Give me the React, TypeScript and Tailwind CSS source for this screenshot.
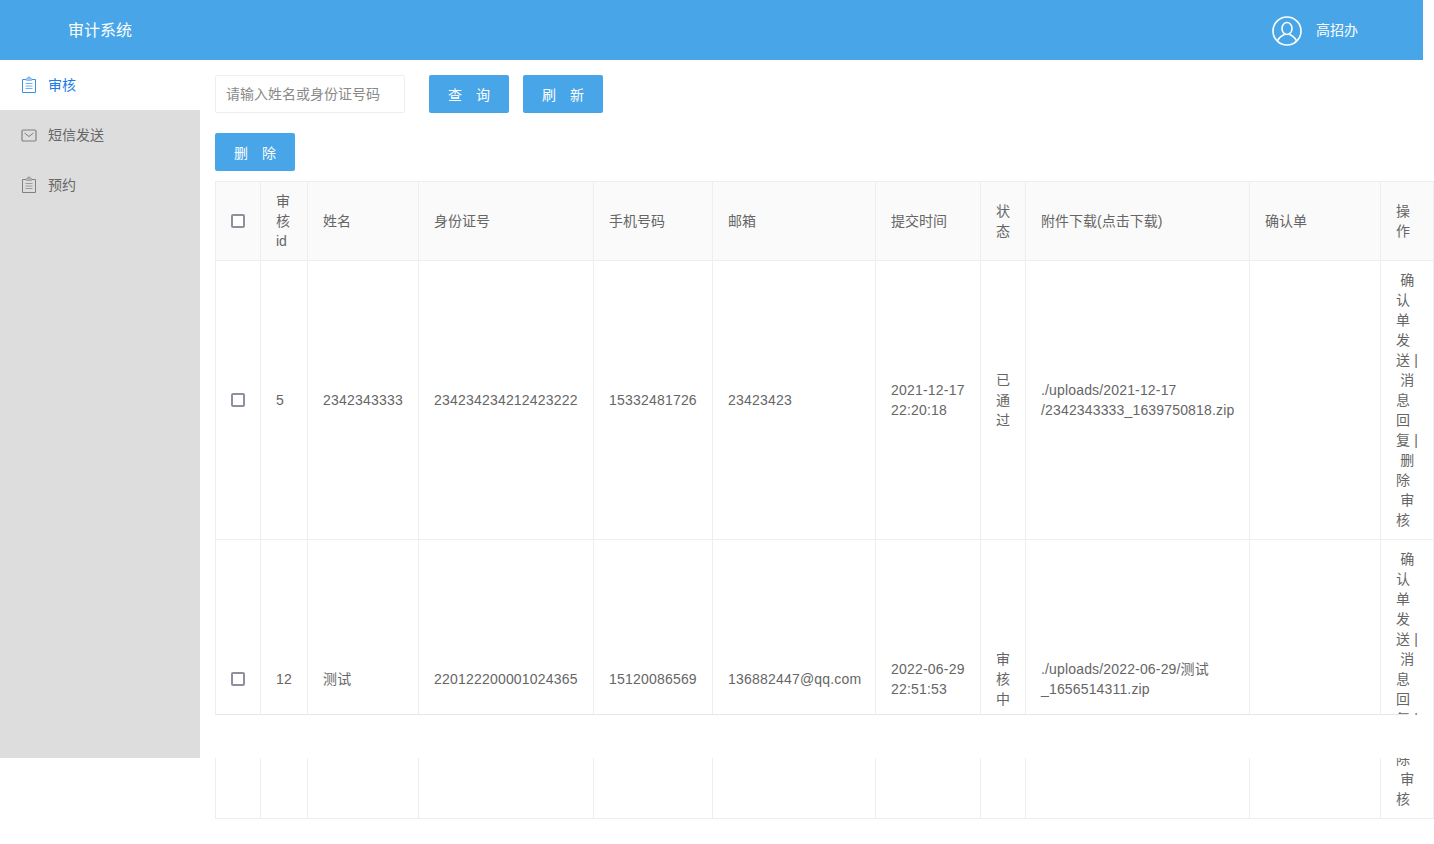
import type { ReactNode } from "react";

function ClipboardIcon({ className }: { className: string }) {
  return (
    <svg width="16" height="18" viewBox="0 0 16 18" fill="none" className={className}>
      <path d="M5 3.5H1.5V16.5H14.5V3.5H11" stroke="currentColor" />
      <path d="M5.5 3.5V2.5H6.8V1H9.2V2.5H10.5V4.5H5.5Z" fill="currentColor" fillOpacity="0.45" stroke="currentColor" strokeOpacity="0.6" strokeWidth="0.8" />
      <path d="M4.5 7.5H11.5M4.5 10H11.5M4.5 12.5H11.5" stroke="currentColor" strokeOpacity="0.7" />
    </svg>
  );
}

function MailIcon({ className }: { className: string }) {
  return (
    <svg width="16" height="13" viewBox="0 0 16 13" fill="none" className={className}>
      <rect x="1" y="1" width="14" height="11" rx="1.2" stroke="currentColor" strokeWidth="1.2" />
      <path d="M3.5 4L8 7.5L12.5 4" stroke="currentColor" />
    </svg>
  );
}

function UserIcon() {
  return (
    <svg width="30" height="30" viewBox="0 0 30 30" fill="none" className="mt-[2px] text-white">
      <circle cx="15" cy="15" r="14" stroke="currentColor" strokeWidth="1.6" />
      <ellipse cx="15" cy="12.5" rx="5" ry="6" stroke="currentColor" strokeWidth="1.6" />
      <path d="M5.5 25C7 21 10 19.5 12.5 18.5M24.500 25C23 21 20 19.500 17.500 18.500" stroke="currentColor" strokeWidth="1.6" />
    </svg>
  );
}

function Btn({ a, b }: { a: string; b: string }) {
  return (
    <button className="flex h-[38px] w-20 items-center justify-center gap-[14px] rounded-[2px] bg-[#48a6e8] pt-[2px] text-sm text-white">
      <span>{a}</span>
      <span>{b}</span>
    </button>
  );
}

function Checkbox() {
  return <input type="checkbox" className="block h-[14px] w-[14px] appearance-none rounded-[2px] border-2 border-[#8f8f9d] bg-white" />;
}

const widths = [45, 47, 111, 175, 119, 163, 105, 45, 224, 131, 53];
const headers: ReactNode[] = [
  <Checkbox />,
  "审核id",
  "姓名",
  "身份证号",
  "手机号码",
  "邮箱",
  "提交时间",
  "状态",
  "附件下载(点击下载)",
  "确认单",
  "操作",
];

const rows = [
  {
    id: "5",
    name: "2342343333",
    card: "234234234212423222",
    phone: "15332481726",
    email: "23423423",
    date: "2021-12-17",
    time: "22:20:18",
    status: "已通过",
    file: ["./uploads/2021-12-17", "/2342343333_1639750818.zip"],
  },
  {
    id: "12",
    name: "测试",
    card: "220122200001024365",
    phone: "15120086569",
    email: "136882447@qq.com",
    date: "2022-06-29",
    time: "22:51:53",
    status: "审核中",
    file: ["./uploads/2022-06-29/测试", "_1656514311.zip"],
  },
];

const cell = "border border-[#eeeeee] px-[15px] py-[9px] align-middle text-sm leading-5 font-normal text-[#666666]";
const latin = "tracking-[0.2px]";

export default function App() {
  return (
    <div className="relative min-h-[844px] bg-white font-['Liberation_Sans','Noto_Sans_CJK_SC',sans-serif]">
      {/* Header */}
      <header className="flex h-[60px] w-[1423px] items-center justify-between bg-[#48a6e8] pr-[65px] pl-[68px] text-white">
        <span className="pt-[2px] text-base">审计系统</span>
        <div className="flex items-center gap-[14px]">
          <UserIcon />
          <span className="text-sm">高招办</span>
        </div>
      </header>

      <div className="flex items-start">
        {/* Sidebar */}
        <aside className="h-[698px] w-[200px] shrink-0 bg-[#dddddd] text-sm text-[#666666]">
          <div className="flex h-[50px] items-center gap-[11px] bg-white pl-[21px] text-[#1a7be6]">
            <ClipboardIcon className="text-[#3b8fe8]" />
            <span>审核</span>
          </div>
          <div className="flex h-[50px] items-center gap-[11px] pl-[21px]">
            <MailIcon className="text-[#808080]" />
            <span>短信发送</span>
          </div>
          <div className="flex h-[50px] items-center gap-[11px] pl-[21px]">
            <ClipboardIcon className="text-[#808080]" />
            <span>预约</span>
          </div>
        </aside>

        {/* Main */}
        <main className="w-[1234px] pt-[15px] pl-[15px]">
          <div className="flex items-center">
            <input
              placeholder="请输入姓名或身份证号码"
              className="mr-6 h-[38px] w-[190px] rounded-[2px] border border-[#eeeeee] pl-[10px] text-sm outline-none placeholder:text-[#8a8a8a]"
            />
            <div className="flex gap-[14px]">
              <Btn a="查" b="询" />
              <Btn a="刷" b="新" />
            </div>
          </div>
          <div className="mt-5 mb-[10px]">
            <Btn a="删" b="除" />
          </div>

          <table className="w-[1218px] table-fixed border-collapse">
            <colgroup>
              {widths.map((w, i) => (
                <col key={i} style={{ width: w }} />
              ))}
            </colgroup>
            <thead>
              <tr className="bg-[#fafafa]">
                {headers.map((h, i) => (
                  <th key={i} className={`${cell} text-left`}>
                    {h}
                  </th>
                ))}
              </tr>
            </thead>
            <tbody>
              {rows.map((r) => (
                <tr key={r.id}>
                  <td className={cell}>
                    <Checkbox />
                  </td>
                  <td className={`${cell} ${latin}`}>{r.id}</td>
                  <td className={`${cell} ${latin}`}>{r.name}</td>
                  <td className={`${cell} ${latin}`}>{r.card}</td>
                  <td className={`${cell} ${latin}`}>{r.phone}</td>
                  <td className={`${cell} ${latin}`}>{r.email}</td>
                  <td className={`${cell} ${latin}`}>
                    {r.date}
                    <br />
                    {r.time}
                  </td>
                  <td className={cell}>{r.status}</td>
                  <td className={`${cell} tracking-[0.16px] text-[#333333]`}>
                    {r.file[0]}
                    <br />
                    {r.file[1]}
                  </td>
                  <td className={cell}></td>
                  <td className={`${cell} [word-spacing:0.4px]`}>{"\u00a0确认单发送 | \u00a0消息回复 | \u00a0删除 \u00a0审核"}</td>
                </tr>
              ))}
            </tbody>
          </table>
        </main>
      </div>

      {/* White strip lying over the table */}
      <div className="absolute top-[715px] left-[200px] h-[43px] w-[1233px] bg-white" />
      <div className="absolute top-[714px] left-[215px] h-px w-[1193px] bg-[#e6e6e6]" />
    </div>
  );
}
